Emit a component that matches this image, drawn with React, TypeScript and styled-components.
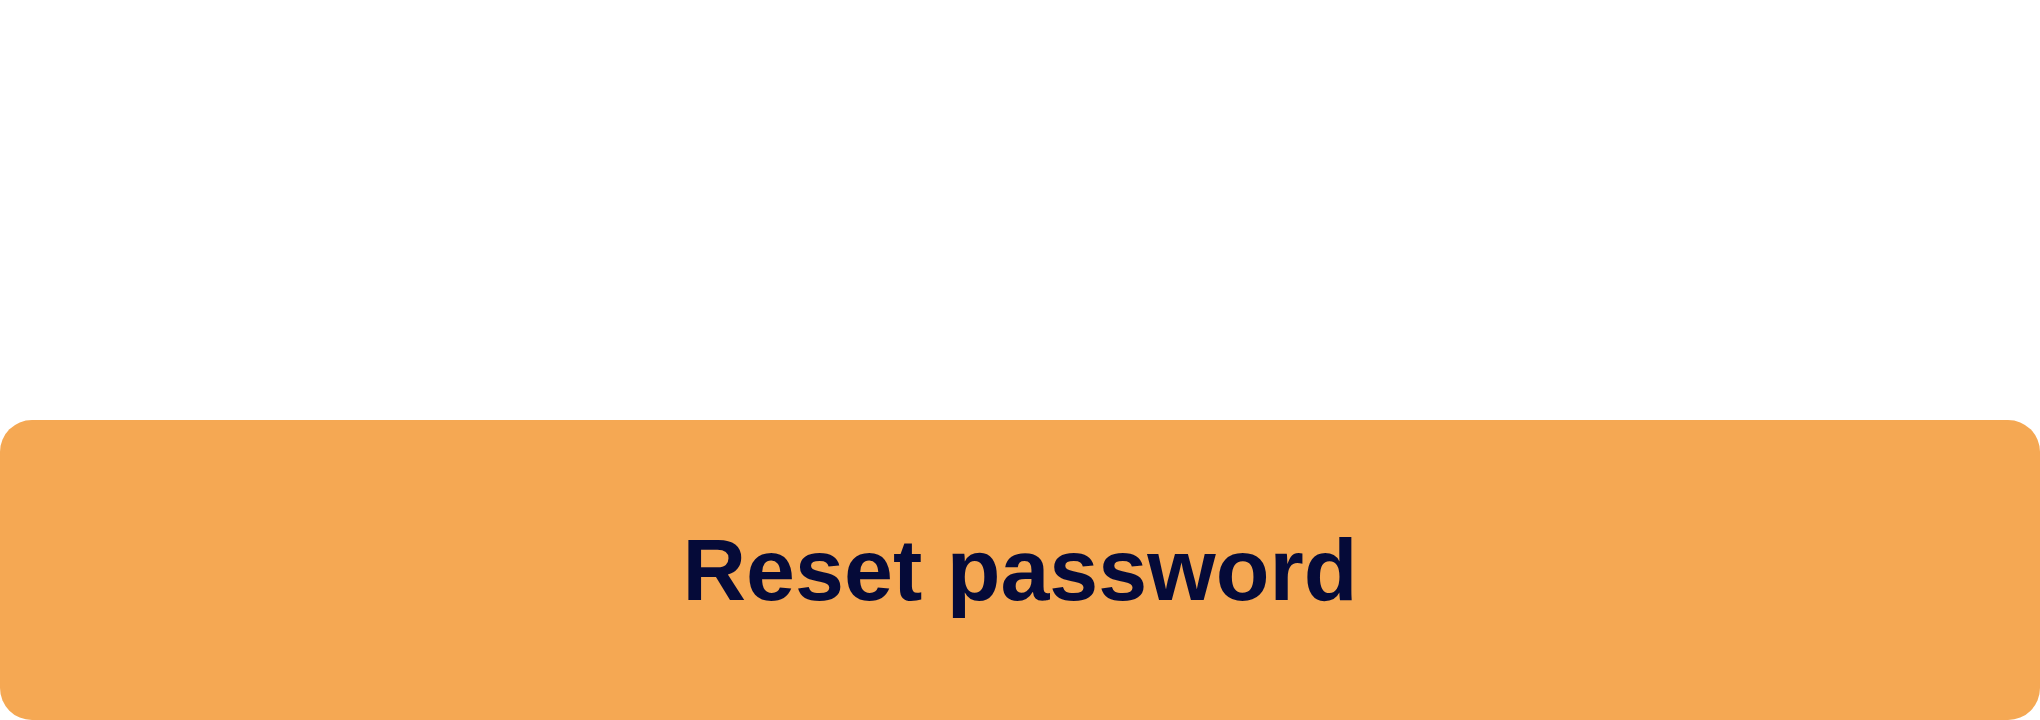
import React from "react";
import styled, { createGlobalStyle } from "styled-components";

const Global = createGlobalStyle`
  html, body {
    margin: 0;
    padding: 0;
    background: #ffffff;
  }
  #root {
    width: 2040px;
    height: 720px;
  }
`;

const Page = styled.div`
  width: 2040px;
  height: 720px;
  display: flex;
  flex-direction: column;
  justify-content: flex-end;
  background: #ffffff;
`;

const ResetButton = styled.button`
  width: 2040px;
  height: 300px;
  margin: 0;
  padding: 0;
  border: none;
  border-radius: 32px;
  background: #f5a853;
  color: #050a38;
  font-family: "Liberation Sans", Arial, sans-serif;
  font-weight: 700;
  font-size: 88px;
  line-height: 1;
  display: flex;
  align-items: center;
  justify-content: center;
  cursor: pointer;
`;

export default function App() {
  return (
    <>
      <Global />
      <Page>
        <ResetButton type="button">Reset password</ResetButton>
      </Page>
    </>
  );
}
